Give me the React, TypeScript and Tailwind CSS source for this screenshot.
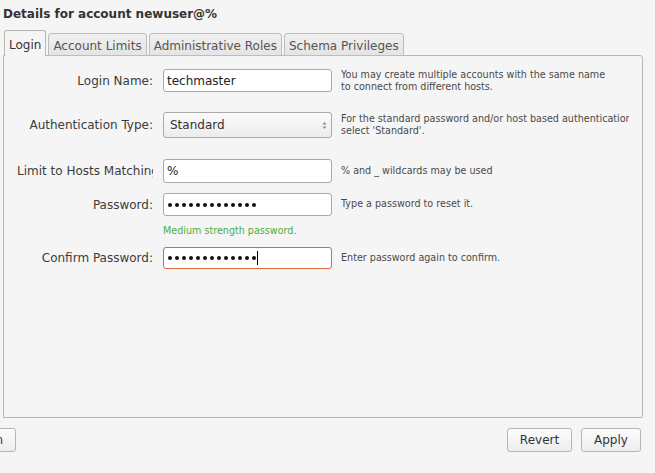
import React from 'react';

const tabs = ['Login', 'Account Limits', 'Administrative Roles', 'Schema Privileges'];

const Dots = ({ n }: { n: number }) => (
  <div className="flex gap-[3px]">
    {Array.from({ length: n }).map((_, i) => (
      <span key={i} className="w-[4px] h-[4px] rounded-full bg-[#111]" />
    ))}
  </div>
);

export default function App() {
  return (
    <div className="w-[655px] h-[473px] bg-[#f5f5f5] overflow-hidden text-[#3c3c3c] font-['DejaVu_Sans',sans-serif] relative">
      {/* Header */}
      <div className="pl-[3px] pt-[5px] h-[30px] text-[12px] font-bold text-[#333]">
        Details for account newuser@%
      </div>

      {/* Tabs */}
      <div className="flex items-end h-[26px] pl-[4px] gap-[2px] relative z-10">
        {tabs.map((t, i) =>
          i === 0 ? (
            <div
              key={t}
              className="h-[26px] px-[4px] pt-[5px] border border-b-0 border-[#b8b8b8] rounded-t-[3px] bg-[#f5f5f5] text-[12px] text-[#333]"
            >
              {t}
            </div>
          ) : (
            <div
              key={t}
              className="h-[23px] px-[4px] pt-[3px] border border-[#bdbdbd] rounded-t-[3px] bg-gradient-to-b from-[#f0f0f0] to-[#e4e4e4] text-[12px] text-[#555]"
            >
              {t}
            </div>
          )
        )}
      </div>

      {/* Panel */}
      <div className="ml-[3px] mt-[-1px] w-[640px] h-[363px] border border-[#b8b8b8] rounded-tr-[3px] rounded-br-[2px] bg-[#f5f5f5] pl-[13px] pt-[13px]">
        <div className="flex items-center h-[23px]">
          <div className="w-[136px] text-right text-[12px] whitespace-nowrap">Login Name:</div>
          <div className="ml-[10px] w-[169px] h-[23px] bg-white border border-[#a9a9a9] rounded-[3px] px-[3px] flex items-center text-[12px] text-[#222]">
            techmaster
          </div>
          <div className="ml-[9px] w-[288px] overflow-hidden text-[9.6px] leading-[12px] text-[#4a4a4a] whitespace-nowrap">
            You may create multiple accounts with the same name
            <br />
            to connect from different hosts.
          </div>
        </div>

        <div className="flex items-center h-[26px] mt-[20px]">
          <div className="w-[136px] text-right text-[12px] whitespace-nowrap">Authentication Type:</div>
          <div className="ml-[10px] w-[169px] h-[26px] bg-gradient-to-b from-[#fbfbfb] to-[#ececec] border border-[#a9a9a9] rounded-[3px] pl-[6px] pr-[4px] flex items-center justify-between text-[12px] text-[#333]">
            <span>Standard</span>
            <svg width="5" height="9" viewBox="0 0 5 9">
              <path d="M2.5 1 L4.5 3.5 H0.5 Z" fill="#8a8a8a" />
              <path d="M2.5 8 L4.5 5.5 H0.5 Z" fill="#8a8a8a" />
            </svg>
          </div>
          <div className="ml-[9px] w-[288px] overflow-hidden text-[9.6px] leading-[12px] text-[#4a4a4a] whitespace-nowrap">
            For the standard password and/or host based authentication
            <br />
            select 'Standard'.
          </div>
        </div>

        <div className="flex items-center h-[24px] mt-[21px]">
          <div className="w-[136px] text-[12px] whitespace-nowrap overflow-hidden">Limit to Hosts Matching</div>
          <div className="ml-[10px] w-[169px] h-[24px] bg-white border border-[#a9a9a9] rounded-[3px] px-[3px] flex items-center text-[12px] text-[#222]">
            %
          </div>
          <div className="ml-[9px] text-[9.6px] text-[#4a4a4a] whitespace-nowrap">% and _ wildcards may be used</div>
        </div>

        <div className="flex items-center h-[23px] mt-[10px]">
          <div className="w-[136px] text-right text-[12px] whitespace-nowrap">Password:</div>
          <div className="ml-[10px] w-[169px] h-[23px] bg-white border border-[#a9a9a9] rounded-[3px] pl-[4px] flex items-center">
            <Dots n={13} />
          </div>
          <div className="ml-[9px] text-[9.6px] text-[#4a4a4a] whitespace-nowrap">Type a password to reset it.</div>
        </div>

        <div className="ml-[146px] mt-[9px] h-[12px] text-[9.6px] leading-[12px] text-[#4caf3c]">
          Medium strength password.
        </div>

        <div className="flex items-center h-[22px] mt-[10px]">
          <div className="w-[136px] text-right text-[12px] whitespace-nowrap">Confirm Password:</div>
          <div className="ml-[10px] w-[169px] h-[22px] bg-white border border-[#e0663c] rounded-[3px] pl-[4px] flex items-center">
            <Dots n={13} />
            <span className="w-px h-[14px] bg-black ml-[1px]" />
          </div>
          <div className="ml-[9px] text-[9.6px] text-[#4a4a4a] whitespace-nowrap">Enter password again to confirm.</div>
        </div>
      </div>

      {/* Footer buttons */}
      <div className="flex items-center mt-[10px] h-[24px]">
        <button className="ml-[-40px] w-[56px] h-[24px] border border-[#b5b5b5] rounded-[3px] bg-gradient-to-b from-[#fcfcfc] to-[#ededed] text-[12px] text-[#333] text-right pr-[12px]">
          Login
        </button>
        <div className="flex-1" />
        <button className="w-[65px] h-[24px] border border-[#b5b5b5] rounded-[3px] bg-gradient-to-b from-[#fcfcfc] to-[#ededed] text-[12px] text-[#333]">
          Revert
        </button>
        <button className="ml-[9px] mr-[14px] w-[60px] h-[24px] border border-[#b5b5b5] rounded-[3px] bg-gradient-to-b from-[#fcfcfc] to-[#ededed] text-[12px] text-[#333]">
          Apply
        </button>
      </div>
    </div>
  );
}
